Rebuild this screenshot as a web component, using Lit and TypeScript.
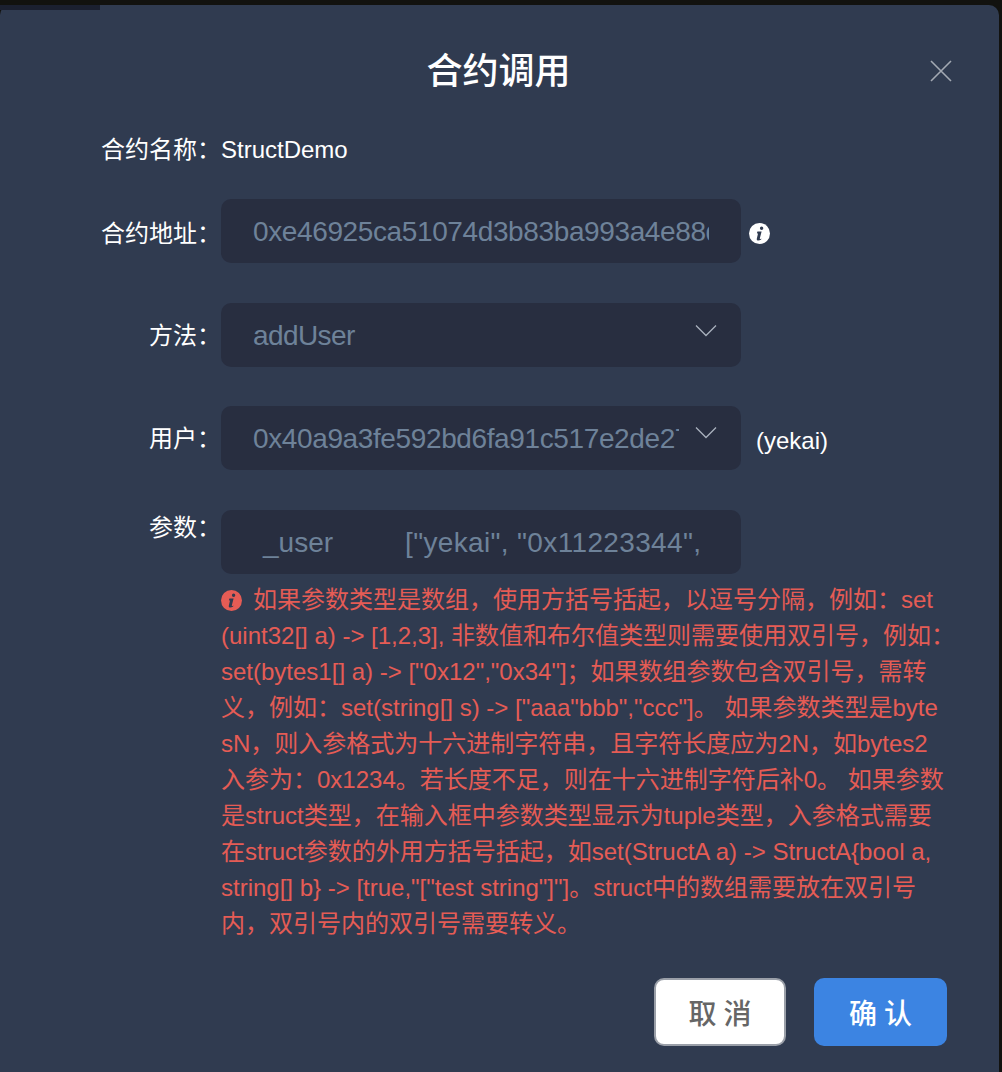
import { LitElement, html, css } from "lit";
import { customElement } from "lit/decorators.js";

const C = "\uFF0C";
const K = "\uFF1A";
const S = "\uFF1B";

const chevron = html`<svg class="chev" width="22" height="13" viewBox="0 0 22 13"><path d="M1 1.5 L11 11.5 L21 1.5" fill="none" stroke="#a9b1bd" stroke-width="1.3"/></svg>`;
const info = (fg: string, bg: string) => html`<svg class="info" width="21" height="21" viewBox="0 0 21 21"><circle cx="10.5" cy="10.5" r="10.5" fill="${bg}"/><path d="M12.6 3.6a1.7 1.7 0 1 1 0 3.4 1.7 1.7 0 0 1 0-3.4zM8.4 8.6h4.2l-1.8 7c-.1.5.5.5 1.5-.2l-.1 1c-2.4 1.6-4.9 1.5-4.4-.7l1.2-5.3c-.4 0-.8-.1-1.1-.2z" fill="${fg}"/></svg>`;

const errLines = [
  `如果参数类型是数组${C}使用方括号括起${C}以逗号分隔${C}例如${K}set`,
  `(uint32[] a) -> [1,2,3], 非数值和布尔值类型则需要使用双引号${C}例如${K}`,
  `set(bytes1[] a) -> ["0x12","0x34"]${S}如果数组参数包含双引号${C}需转`,
  `义${C}例如${K}set(string[] s) -> ["aaa"bbb","ccc"]。 如果参数类型是byte`,
  `sN${C}则入参格式为十六进制字符串${C}且字符长度应为2N${C}如bytes2`,
  `入参为${K}0x1234。若长度不足${C}则在十六进制字符后补0。 如果参数`,
  `是struct类型${C}在输入框中参数类型显示为tuple类型${C}入参格式需要`,
  `在struct参数的外用方括号括起${C}如set(StructA a) -> StructA{bool a,`,
  `string[] b} -> [true,"["test string"]"]。struct中的数组需要放在双引号`,
  `内${C}双引号内的双引号需要转义。`,
];

@customElement("app-root")
export class AppRoot extends LitElement {
  static styles = css`
    :host { display: block; width: 1002px; height: 1072px; background: #12120f; overflow: hidden;
      font-family: "Liberation Sans", "Noto Sans CJK SC", sans-serif; }
    .wrap { position: relative; }
    .side { position: absolute; left: 0; top: 0; width: 100px; height: 5px; background: #1b2030; }
    .modal { box-sizing: border-box; width: 999px; height: 1067px; margin-top: 5px; background: #303b50;
      border-radius: 10px 10px 0 0; display: flex; flex-direction: column; }
    .head { height: 128px; flex: none; position: relative; display: flex; justify-content: center; }
    h1 { margin: 45px 2px 0 0; font-size: 36px; line-height: 44px; font-weight: 500; color: #fff; }
    .close { position: absolute; left: 930px; top: 55px; }
    .form { display: flex; flex-direction: column; }
    .row { display: flex; align-items: flex-start; }
    .label { width: 221px; flex: none; box-sizing: border-box; text-align: right;
      font-size: 24px; line-height: 34px; color: #fff; }
    .name { margin-bottom: 32px; }
    .val { font-size: 24px; line-height: 34px; color: #fff; }
    .box { width: 520px; height: 64px; box-sizing: border-box; background: #282e40; border-radius: 10px; flex: none;
      padding: 2px 32px 0; display: flex; align-items: center; font-size: 28px; color: #6e8299; white-space: nowrap; overflow: hidden; position: relative; }
    .clip { overflow: hidden; flex: 1; letter-spacing: -0.38px; }
    .method { letter-spacing: -0.6px; }
    .r1 { margin-bottom: 40px; }
    .r1 .label { padding-top: 18px; }
    .r2 { margin-bottom: 39px; }
    .r2 .label { padding-top: 16px; }
    .r3 { margin-bottom: 40px; }
    .r3 .label { padding-top: 16px; }
    .r3 .chev { top: 20px; }
    .r4 .label { padding-top: 1px; }
    .chev { position: absolute; left: 474px; top: 21px; }
    .info { flex: none; display: block; }
    .after { margin: 24px 0 0 8px; }
    .yk { margin: 17px 0 0 15px; font-size: 24px; line-height: 36px; color: #fff; }
    .uinner { padding-right: 62px; }
    .pname { width: 152px; flex: none; padding-left: 10px; box-sizing: border-box; }
    .clip.pval { letter-spacing: 0.35px; }
    .col { display: flex; flex-direction: column; width: 724px; }
    .err { width: 724px; margin-top: 8px; color: #e55c55; font-size: 24px; line-height: 36px; }
    .line { display: block; white-space: nowrap; }
    .err .info { display: inline-block; vertical-align: -3px; margin-right: 11px; }
    .foot { display: flex; justify-content: flex-end; gap: 28px; padding-right: 52px; margin-top: 36px; }
    button { height: 68px; border-radius: 10px; font-family: inherit; font-size: 28px; font-weight: 500; letter-spacing: 7px; box-sizing: border-box; padding: 0 0 0 7px; }
    .cancel { width: 132px; background: #fff; border: 2px solid #9a9fa8; color: #666; }
    .ok { width: 133px; background: #3c84e2; border: none; color: #fff; }
  `;
  render() {
    return html`<div class="wrap" lang="zh-CN"><div class="side"></div><div class="modal">
      <div class="head"><h1>合约调用</h1>
        <svg class="close" width="22" height="22" viewBox="0 0 22 22"><path d="M1 1 L21 21 M21 1 L1 21" stroke="#a3a9b3" stroke-width="1.6" fill="none"/></svg>
      </div>
      <div class="form">
        <div class="row name"><div class="label">合约名称${K}</div><div class="val">StructDemo</div></div>
        <div class="row r1"><div class="label">合约地址${K}</div>
          <div class="box"><div class="clip">0xe46925ca51074d3b83ba993a4e88d4e5c8b1a7f2</div></div>
          <div class="after">${info("#303b50", "#fff")}</div></div>
        <div class="row r2"><div class="label">方法${K}</div>
          <div class="box"><span class="method">addUser</span>${chevron}</div></div>
        <div class="row r3"><div class="label">用户${K}</div>
          <div class="box uinner"><div class="clip">0x40a9a3fe592bd6fa91c517e2de27a1c4d8</div>${chevron}</div>
          <div class="yk">(yekai)</div></div>
        <div class="row r4"><div class="label">参数${K}</div>
          <div class="col">
            <div class="box"><div class="pname">_user</div><div class="clip pval">["yekai", "0x11223344",</div></div>
            <div class="err">${errLines.map((l, i) => html`<span class="line">${i === 0 ? info("#303b50", "#e55c55") : ""}${l}</span>`)}</div>
          </div>
        </div>
      </div>
      <div class="foot"><button class="cancel">取消</button><button class="ok">确认</button></div>
    </div></div>`;
  }
}
